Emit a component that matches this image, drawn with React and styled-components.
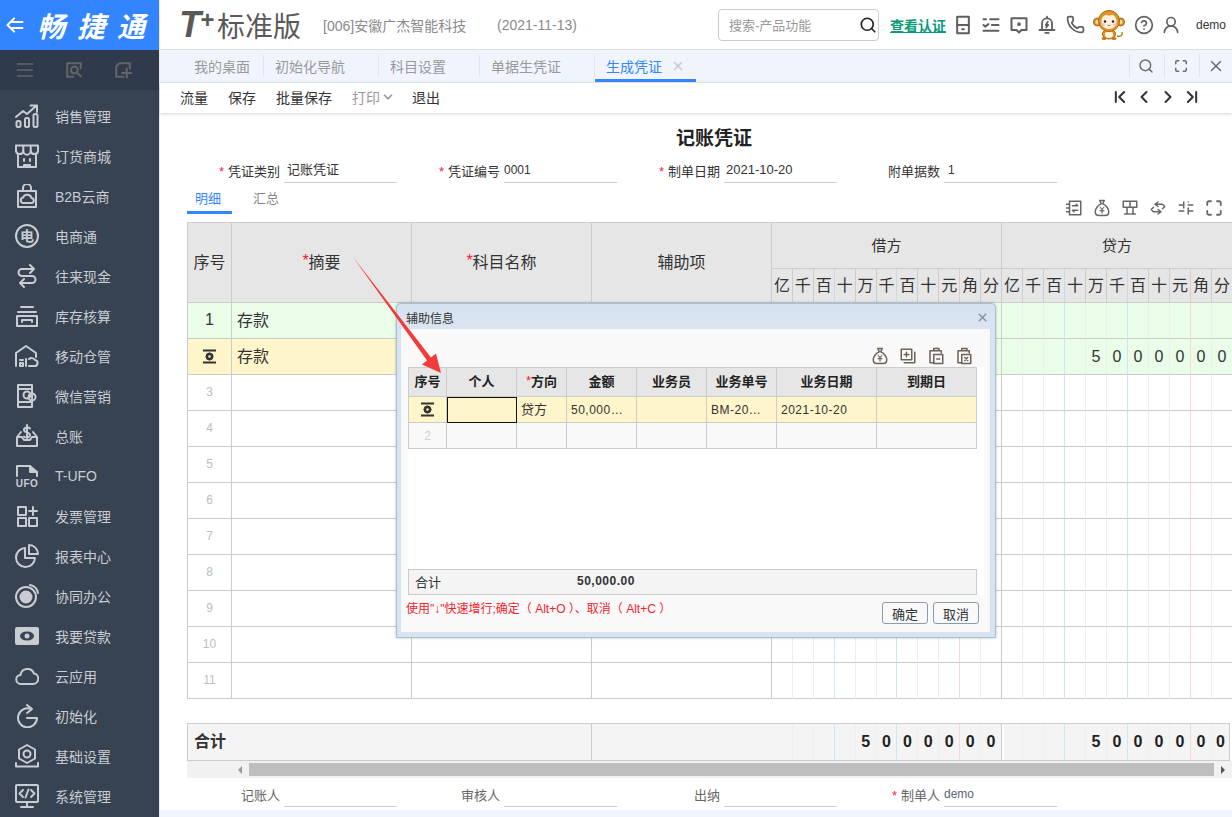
import React from 'react';
import styled, { createGlobalStyle } from 'styled-components';
import { Phone, CircleHelp, UserRound, Search, X, Maximize, ChevronFirst, ChevronLast, ChevronLeft, ChevronRight, ChevronDown } from 'lucide-react';

const GlobalStyle = createGlobalStyle`
  html, body { margin: 0; padding: 0; height: 100%; overflow: hidden; background: #fff; }
  body { font-family: "Liberation Sans", "Noto Sans CJK SC", sans-serif; color: #333; }
  * { box-sizing: border-box; }
`;

const Page = styled.div`
  position: relative;
  display: flex;
  width: 1232px;
  height: 817px;
  overflow: hidden;
`;

/* ---------- sidebar ---------- */
const Sidebar = styled.aside`
  width: 159px;
  flex: none;
  display: flex;
  flex-direction: column;
  background: #374252;
`;
const Brand = styled.div`
  height: 50px;
  display: flex;
  align-items: center;
  padding-left: 5px;
  background: #3385ff;
  color: #fff;
`;
const BrandName = styled.span`
  margin-left: 12px;
  font-size: 28px;
  font-weight: 700;
  font-style: italic;
  letter-spacing: 12px;
  white-space: nowrap;
`;
const SideTools = styled.div`
  height: 40px;
  display: flex;
  align-items: center;
  justify-content: space-between;
  padding: 0 27px 0 16px;
  background: #2f3a4c;
  color: #646464;
`;
const Menu = styled.nav`
  padding-top: 6px;
`;
const MenuItem = styled.div`
  height: 40px;
  display: flex;
  align-items: center;
  gap: 16px;
  padding-left: 15px;
  font-size: 14px;
  color: #c9cdd3;
`;

const Ico = ({ size = 24, children, sw = 2 }) => (
  <svg width={size} height={size} viewBox="0 0 24 24" fill="none" stroke="currentColor" strokeWidth={sw} strokeLinecap="round" strokeLinejoin="round" style={{ flex: 'none', display: 'block' }}>
    {children}
  </svg>
);

const menuIcons = {
  sales: <><rect x="1.5" y="17" width="4" height="6" rx="1.5" /><rect x="10" y="14" width="4" height="9" rx="1.5" /><rect x="18.5" y="10" width="4" height="13" rx="1.5" /><path d="M1 13l7-6 4 3 9-8M15.5 1.5H22V8" /></>,
  store: <><path d="M1 1.5h22v5.5a3.7 3.7 0 0 1-7.3 0 3.7 3.7 0 0 1-7.4 0 3.7 3.7 0 0 1-7.3 0z" /><path d="M3 11v12h18V11M9 15v2M15 15v2M9 23v-2h6v2M8.3 2v5M15.7 2v5" /></>,
  bag: <><rect x="3" y="7" width="18" height="16" /><path d="M8 7V4a4 4 0 0 1 8 0v3M8 19h8a2.5 2.5 0 0 0 .5-5 4.5 4.5 0 0 0-8.5-.5 2.8 2.8 0 0 0 0 5.500z" /></>,
  dian: <><circle cx="12" cy="12" r="11" /><text x="12" y="17" textAnchor="middle" fontSize="14" fontWeight="700" fill="currentColor" stroke="none">电</text></>,
  swap: <path d="M15 1l4 4-4 4M19 5H7a3.500 3.500 0 0 0 0 7h10a3.500 3.500 0 0 1 0 7H5M9 15l-4 4 4 4" />,
  stock: <><path d="M6 3h12M3 8h18" /><rect x="2" y="12" width="20" height="10" /><path d="M7 18v-2h10v2" /></>,
  house: <><path d="M1 22V9l10-7 10 7v4" /><path d="M5 22v-3h3v3zM5 16h3M11 15v7M14 22h5a3 3 0 0 0 1-6 4 4 0 0 0-6-1" /></>,
  wechat: <><rect x="3" y="1" width="14" height="22" /><path d="M3 18h14M3 5h14" /><circle cx="12" cy="11" r="3.500" /><circle cx="17" cy="13" r="3.500" /></>,
  ledger: <><path d="M6 8L2 13v9h20v-9l-4-5M2 13h5l2 3h6l2-3h5" /><path d="M15 4.500C14 3 9 3 9 6s6 2 6 5-5 3-6 1.500M12 1v13" /></>,
  ufo: <><path d="M2 12V2h13l7 6v4" /><path d="M15 2v6h7" fill="currentColor" /><text x="12" y="23" textAnchor="middle" fontSize="10" fontWeight="700" fill="currentColor" stroke="none" letterSpacing="0.500">UFO</text></>,
  tiles: <><rect x="3" y="3" width="8" height="8" /><rect x="3" y="14" width="8" height="8" /><rect x="14" y="14" width="8" height="8" /><path d="M18 3v8M14 7h8" /></>,
  pie: <><path d="M10 4a9.500 9.500 0 1 0 10 10H10z" /><path d="M14 1a9 9 0 0 1 9 9h-9z" /></>,
  sync: <><circle cx="11" cy="13" r="10" /><circle cx="11" cy="13" r="5.500" fill="currentColor" /><path d="M15 1a9 9 0 0 1 8 8" /></>,
  loan: <><rect x="1" y="4" width="22" height="16" rx="1" fill="currentColor" /><ellipse cx="12" cy="12" rx="7" ry="4.500" fill="#374252" stroke="none" /><circle cx="12" cy="12" r="2.500" fill="currentColor" stroke="none" /></>,
  cloud: <path d="M6 20a4.500 4.500 0 0 1-.5-9A7 7 0 0 1 19 9.500 5.300 5.300 0 0 1 18 20z" />,
  init: <><path d="M16 5a9.500 9.500 0 1 0 6 9H12" /><path d="M12 1l5 4-5 4" /></>,
  gear: <><path d="M12 1l8 4.500v9L12 19l-8-4.500v-9z" /><circle cx="12" cy="10" r="3.500" /><path d="M1 19v3.500h22V19" /></>,
  code: <><rect x="1" y="1" width="22" height="17" rx="1" /><path d="M12 18v4M6 23h12M8 6l-3.500 3.500L8 13M16 6l3.500 3.500L16 13M13.500 5.500l-3 8" /></>,
};

const menu = [
  ['sales', '销售管理'], ['store', '订货商城'], ['bag', 'B2B云商'], ['dian', '电商通'], ['swap', '往来现金'],
  ['stock', '库存核算'], ['house', '移动仓管'], ['wechat', '微信营销'], ['ledger', '总账'], ['ufo', 'T-UFO'],
  ['tiles', '发票管理'], ['pie', '报表中心'], ['sync', '协同办公'], ['loan', '我要贷款'], ['cloud', '云应用'],
  ['init', '初始化'], ['gear', '基础设置'], ['code', '系统管理'],
];

/* ---------- top header ---------- */
const Main = styled.main`
  flex: 1;
  min-width: 0;
  display: flex;
  flex-direction: column;
  border-left: 1px solid #e8e8e8;
`;
const Header = styled.header`
  height: 50px;
  flex: none;
  display: flex;
  align-items: center;
  padding-left: 19px;
  border-bottom: 1px solid #dcdcdc;
`;
const Product = styled.div`
  display: flex;
  align-items: center;
  width: 144px;
  color: #595959;
  font-size: 28px;
  white-space: nowrap;
`;
const ProductMark = styled.span`
  font-size: 36px;
  font-weight: 700;
  font-style: italic;
  line-height: 1;
  margin-right: 4px;
  letter-spacing: -1px;
  & > i { font-size: 24px; vertical-align: 9px; font-style: italic; }
`;
const Company = styled.span`
  width: 174px;
  font-size: 14px;
  color: #8a8a8a;
  white-space: nowrap;
`;
const DateText = styled.span`
  width: 221px;
  font-size: 14px;
  color: #8a8a8a;
`;
const SearchBox = styled.div`
  width: 161px;
  height: 32px;
  flex: none;
  display: flex;
  align-items: center;
  justify-content: space-between;
  padding: 0 1px 0 10px;
  border: 1px solid #cccccc;
  border-radius: 4px;
  font-size: 13px;
  color: #999;
`;
const CertLink = styled.a`
  margin-left: 11px;
  font-size: 14px;
  font-weight: 700;
  color: #0a9a78;
  text-decoration: underline;
  white-space: nowrap;
`;
const HeadIcons = styled.div`
  display: flex;
  align-items: center;
  color: #5f5f5f;
  margin-left: 3px;
`;
const HeadIcon = styled.span`
  width: ${p => p.$w || 28}px;
  display: flex;
  justify-content: center;
`;
const DemoName = styled.span`
  margin-left: 13px;
  font-size: 12px;
  color: #333;
`;

/* ---------- tabs + toolbar ---------- */
const TabBar = styled.div`
  height: 33px;
  flex: none;
  display: flex;
  padding-left: 23px;
  background: #f0f5fd;
  border-bottom: 1px solid #e6e6e6;
`;
const Tab = styled.div`
  position: relative;
  display: flex;
  align-items: center;
  height: 32px;
  padding: 0 ${p => (p.$first ? 14 : p.$active ? 11 : 34)}px 0 11px;
  gap: 9px;
  font-size: 14px;
  white-space: nowrap;
  color: ${p => (p.$active ? '#3385ff' : '#999')};
  ${p => p.$active && 'border-bottom: 3px solid #3385ff; padding-top: 3px;'}
  &::after {
    content: ${p => (p.$active ? 'none' : '""')};
    position: absolute;
    right: 0;
    top: 5px;
    bottom: 5px;
    width: 1px;
    background: #e2e6ec;
  }
`;
const TabTools = styled.div`
  margin-left: auto;
  display: flex;
  color: #6b6b6b;
`;
const TabTool = styled.div`
  width: ${p => p.$w}px;
  height: 24px;
  margin-top: 4px;
  padding-right: ${p => p.$w - 32}px;
  display: flex;
  align-items: center;
  justify-content: center;
  border-left: 1px solid #e2e6ec;
`;
const Toolbar = styled.div`
  height: 30px;
  flex: none;
  display: flex;
  align-items: center;
  padding: 0 30px 2px 20px;
  gap: 20px;
  font-size: 14px;
  background: #fff;
  box-shadow: 0 1px 3px rgba(0, 0, 0, 0.16);
  position: relative;
`;
const ToolAction = styled.span`
  display: flex;
  align-items: center;
  gap: 1px;
  color: ${p => (p.$off ? '#999' : '#333')};
  white-space: nowrap;
  ${p => p.$off && 'margin-right: -3px;'}
`;
const Pager = styled.div`
  margin-left: auto;
  display: flex;
  gap: 4px;
  color: #333;
`;

/* ---------- voucher ---------- */
const Content = styled.section`
  flex: 1;
  min-height: 0;
  display: flex;
  flex-direction: column;
  overflow: hidden;
`;
const Title = styled.h1`
  margin: 13px 0 6px;
  height: 26px;
  padding-left: 36px;
  text-align: center;
  font-size: 19px;
  line-height: 26px;
  font-weight: 700;
  color: #222;
`;
const FieldRow = styled.div`
  flex: none;
  display: grid;
  grid-template-columns: repeat(4, 220px);
  margin: ${p => p.$top || 0}px 0 0 17px;
`;
const Field = styled.div`
  height: 25px;
  display: flex;
  align-items: center;
`;
const FieldLabel = styled.label`
  width: 103px;
  text-align: right;
  font-size: 13px;
  color: ${p => (p.$muted ? '#666' : '#333')};
  white-space: nowrap;
`;
const Star = styled.span`
  color: #f5222d;
  margin-right: ${p => (p.$tight ? 0 : 4)}px;
  font-weight: 400;
`;
const FieldValue = styled.div`
  width: 113px;
  height: 25px;
  margin-left: 4px;
  padding-left: ${p => p.$pad ?? 3}px;
  line-height: 24px;
  border-bottom: 1px solid #cccccc;
  font-size: ${p => (p.$big ? 13 : 12)}px;
  color: ${p => (p.$muted ? '#5a6578' : '#333')};
`;
const SubTabs = styled.div`
  height: 31px;
  flex: none;
  display: flex;
  align-items: stretch;
  margin: 0 9px 8px 27px;
`;
const SubTab = styled.div`
  width: 45px;
  margin-right: ${p => (p.$active ? 21 : 0)}px;
  padding: 5px ${p => (p.$active ? 3 : 0)}px 0 0;
  text-align: ${p => (p.$active ? 'center' : 'left')};
  font-size: 13px;
  color: ${p => (p.$active ? '#3385ff' : '#888')};
  ${p => p.$active && 'border-bottom: 3px solid #3385ff;'}
`;
const TinyIcons = styled.div`
  margin: 0 0 -3px auto;
  display: flex;
  align-items: flex-end;
  gap: 10px;
  color: #666;
`;

const tone = i => (i === 2 || i === 5 ? 'blue' : i === 8 ? 'red' : 'plain');
const lineColor = { blue: '#cfe6f2', red: '#f3d8d8', plain: '#eeeeee' };
const headLine = { blue: '#c6dbe6', red: '#e2caca', plain: '#cccccc' };

const VoucherGrid = styled.div`
  flex: none;
  display: grid;
  grid-template-columns: 44px 180px 180px 180px repeat(11, 20.91px) repeat(11, 21px);
  grid-template-rows: 46px 34px repeat(11, 36px);
  margin-left: 27px;
  width: max-content;
  border-top: 1px solid #cccccc;
  border-left: 1px solid #cccccc;
`;
const HeadCell = styled.div`
  grid-row: span ${p => p.$rows || 1};
  grid-column: span ${p => p.$cols || 1};
  display: flex;
  align-items: center;
  justify-content: center;
  padding-bottom: 3px;
  background: #e6e6e6;
  border-right: 1px solid #cccccc;
  border-bottom: 1px solid #cccccc;
  font-size: ${p => (p.$small ? 15 : 16)}px;
  color: #333;
  white-space: nowrap;
`;
const DigitHead = styled(HeadCell)`
  font-size: 16px;
  border-right-color: ${p => headLine[p.$tone]};
`;
const Cell = styled.div`
  display: flex;
  align-items: center;
  justify-content: ${p => (p.$center ? 'center' : 'flex-start')};
  padding: 0 0 ${p => (p.$center ? 1 : 3)}px ${p => (p.$center ? 0 : 5)}px;
  background: ${p => p.$bg || '#fff'};
  border-right: 1px solid #cccccc;
  border-bottom: 1px solid #cccccc;
  font-size: ${p => (p.$faint ? 12 : 16)}px;
  color: ${p => (p.$faint ? '#bdbdbd' : '#333')};
`;
const DigitCell = styled.div`
  display: flex;
  align-items: center;
  justify-content: center;
  background: ${p => p.$bg || '#fff'};
  border-right: 1px solid ${p => (p.$end ? '#cccccc' : lineColor[p.$tone])};
  border-bottom: 1px solid #cccccc;
  font-size: 16px;
  color: #333;
`;
const TotalGrid = styled.div`
  flex: none;
  display: grid;
  grid-template-columns: 44px 180px 180px 180px repeat(11, 20.91px) repeat(10, 21px) 18px;
  grid-auto-rows: 36px;
  margin: 24px 0 0 27px;
  width: max-content;
  border-top: 1px solid #cccccc;
  border-left: 1px solid #cccccc;
  border-bottom: 1px solid #cccccc;
`;
const TotalLabel = styled.div`
  grid-column: span 3;
  display: flex;
  align-items: center;
  padding: 0 0 4px 6px;
  background: #f4f4f4;
  border-right: 1px solid #cccccc;
  font-size: 16px;
  font-weight: 700;
`;
const TotalBlank = styled.div`
  background: #f4f4f4;
`;
const TotalDigit = styled.div`
  display: flex;
  align-items: center;
  justify-content: center;
  padding-bottom: 1px;
  background: #f4f4f4;
  border-right: 1px solid ${p => (p.$end ? '#cccccc' : lineColor[p.$tone])};
  ${p => p.$gap && 'border-left: 2px solid #fff;'}
  font-size: 16px;
  font-weight: 700;
  color: #222;
`;
const ScrollBar = styled.div`
  height: 17px;
  flex: none;
  display: flex;
  align-items: center;
  margin-left: 27px;
  padding-left: 46px;
  background: #f1f1f1;
  color: #777;
`;
const ScrollThumb = styled.div`
  width: 965px;
  height: 13px;
  margin: 0 4px 0 7px;
  background: #bebebe;
`;
const ScrollArrow = styled.div`
  width: 0;
  height: 0;
  margin-left: ${p => (p.$left ? 5 : 3)}px;
  border-top: 4px solid transparent;
  border-bottom: 4px solid transparent;
  ${p => (p.$left ? 'border-right: 4px solid #999;' : 'border-left: 4px solid #555;')}
`;
const BottomBar = styled.div`
  height: 8px;
  margin-top: 3px;
  flex: none;
  background: #f0f5fd;
`;

/* ---------- dialog ---------- */
const Dialog = styled.div`
  position: absolute;
  left: 396px;
  top: 303px;
  width: 600px;
  height: 335px;
  display: flex;
  flex-direction: column;
  padding: 0 5px 5px 4px;
  background: #d7e3f1;
  border: 1px solid #a9c0d4;
  border-radius: 5px 5px 0 0;
  box-shadow: 0 0 3px rgba(0, 0, 0, 0.25);
  z-index: 5;
`;
const DialogTitle = styled.div`
  height: 25px;
  flex: none;
  display: flex;
  align-items: center;
  justify-content: space-between;
  padding: 2px 1px 0 5px;
  font-size: 12px;
  color: #333;
  background: linear-gradient(#d6e2ef, #dae5f1);
`;
const DialogBody = styled.div`
  flex: 1;
  min-height: 0;
  display: flex;
  flex-direction: column;
  padding-left: 7px;
  background: #f9f9f9;
`;
const DialogIcons = styled.div`
  height: 38px;
  flex: none;
  display: flex;
  align-items: flex-end;
  justify-content: flex-end;
  gap: 10px;
  padding: 0 17px 2px 0;
  color: #6d6258;
`;
const Panel = styled.div`
  width: 576px;
  height: 228px;
  flex: none;
  display: flex;
  flex-direction: column;
  justify-content: space-between;
  background: #fff;
`;
const SubGrid = styled.div`
  width: 569px;
  display: grid;
  grid-template-columns: 38px 70px 50px 70px 70px 70px 100px 100px;
  grid-template-rows: 29px 26px 26px;
  border-top: 1px solid #cccccc;
  border-left: 1px solid #cccccc;
`;
const SubHead = styled.div`
  display: flex;
  align-items: center;
  justify-content: center;
  padding-bottom: 3px;
  background: #e6e6e6;
  border-right: 1px solid #cccccc;
  border-bottom: 1px solid #cccccc;
  font-size: 13px;
  font-weight: 700;
  color: #222;
`;
const SubCell = styled.div`
  display: flex;
  align-items: center;
  justify-content: ${p => (p.$center ? 'center' : 'flex-start')};
  padding: 0 0 ${p => (p.$zh ? 2 : 0)}px ${p => (p.$center ? 0 : 4)}px;
  background: ${p => p.$bg || '#f9f9f9'};
  border-right: 1px solid #cccccc;
  border-bottom: 1px solid #cccccc;
  font-size: ${p => (p.$zh ? 13 : 12)}px;
  color: ${p => (p.$faint ? '#d0d0d0' : '#333')};
  letter-spacing: ${p => (p.$wide ? 0.5 : 0)}px;
  white-space: nowrap;
  ${p => p.$focus && 'outline: 1.5px solid #111; outline-offset: -1px;'}
`;
const SubTotal = styled.div`
  width: 569px;
  height: 26px;
  display: flex;
  align-items: center;
  padding: 0 0 2px 6px;
  background: #f4f4f4;
  border: 1px solid #cccccc;
  font-size: 13px;
`;
const SubTotalSum = styled.span`
  margin-left: 136px;
  font-size: 12px;
  font-weight: 700;
  letter-spacing: 0.5px;
`;
const DialogFoot = styled.div`
  flex: 1;
  display: flex;
  justify-content: space-between;
  padding: 7px 11px 0 0;
`;
const Hint = styled.div`
  margin: -3px 0 0 -2px;
  font-size: 12px;
  color: #f5222d;
  white-space: nowrap;
`;
const Buttons = styled.div`
  display: flex;
  gap: 5px;
`;
const DlgButton = styled.button`
  width: 46px;
  height: 22px;
  padding: 0;
  background: #f9f9f9;
  border: 1px solid #8c9bb0;
  border-radius: 3px;
  font: inherit;
  font-size: 13px;
  color: #333;
`;
const ArrowOverlay = styled.svg`
  position: absolute;
  left: 0;
  top: 0;
  z-index: 6;
  pointer-events: none;
`;

const Handle = () => (
  <svg width="15" height="15" viewBox="0 0 15 15" style={{ display: 'block' }}>
    <path d="M1 1.500h13M1 13.500h13" stroke="#333" strokeWidth="2" />
    <circle cx="7.500" cy="7.500" r="2.500" fill="none" stroke="#333" strokeWidth="2.400" />
    <path d="M7.500 3.500v1M7.500 10.500v1M3.500 7.500h1M10.500 7.500h1M4.700 4.700l.8.8M9.500 9.500l.8.8M10.300 4.700l-.8.8M5.500 9.500l-.8.8" stroke="#333" strokeWidth="1.500" />
  </svg>
);

const MoneyBag = ({ size = 18 }) => (
  <Ico size={size} sw={2}>
    <path d="M9 2h6l-2 4.500c4 1.500 8 6 8 10.500 0 3-2 5-5 5H8c-3 0-5-2-5-5 0-4.500 4-9 8-10.500z" />
    <path d="M9.500 11l2.500 3 2.500-3M12 14v5M9.500 15.500h5" strokeWidth="1.500" />
  </Ico>
);

const Monkey = () => (
  <svg width="32" height="30" viewBox="0 0 32 30" style={{ display: 'block' }}>
    <circle cx="4.500" cy="12" r="4" fill="#e0962a" stroke="#a8650f" />
    <circle cx="27.500" cy="12" r="4" fill="#e0962a" stroke="#a8650f" />
    <circle cx="4.500" cy="12" r="2" fill="#fbdcb4" />
    <circle cx="27.500" cy="12" r="2" fill="#fbdcb4" />
    <path d="M24 26c4 1 6-1 5-4" fill="none" stroke="#c57c1a" strokeWidth="1.500" />
    <ellipse cx="16" cy="24" rx="6.500" ry="5" fill="#e0962a" stroke="#a8650f" />
    <ellipse cx="16" cy="24.500" rx="4" ry="3.500" fill="#fff1df" />
    <ellipse cx="11" cy="28.500" rx="2.500" ry="1.500" fill="#c57c1a" />
    <ellipse cx="21" cy="28.500" rx="2.500" ry="1.500" fill="#c57c1a" />
    <circle cx="16" cy="11" r="10.500" fill="#e0962a" stroke="#a8650f" />
    <path d="M16 6c-2-2-7-1-7.500 5-.5 5 3.500 8 7.500 8s8-3 7.500-8c-.5-6-5.500-7-7.500-5z" fill="#fff1df" />
    <circle cx="12" cy="11.500" r="1.200" fill="#222" />
    <circle cx="20" cy="11.500" r="1.200" fill="#222" />
    <ellipse cx="10" cy="14.500" rx="2" ry="1.200" fill="#f9b7b7" />
    <ellipse cx="22" cy="14.500" rx="2" ry="1.200" fill="#f9b7b7" />
    <path d="M14.500 15c1 .8 2 .8 3 0" fill="none" stroke="#a8650f" />
  </svg>
);

const cny = ['亿', '千', '百', '十', '万', '千', '百', '十', '元', '角', '分'];
const amount = ['', '', '', '', '5', '0', '0', '0', '0', '0', '0'];
const GREEN = '#e9fde9';
const YELLOW = '#fef5cb';

function VoucherRow({ index }) {
  const no = index + 1;
  const leftBg = no === 1 ? GREEN : no === 2 ? YELLOW : undefined;
  const sumBg = no <= 2 ? GREEN : undefined;
  return (
    <>
      {no === 2
        ? <Cell $center $bg={leftBg}><Handle /></Cell>
        : <Cell $center $bg={leftBg} $faint={no > 2}>{no}</Cell>}
      <Cell $bg={leftBg}>{no <= 2 ? '存款' : ''}</Cell>
      <Cell $bg={leftBg} />
      <Cell $bg={leftBg} />
      {cny.map((_, i) => <DigitCell key={'d' + i} $tone={tone(i)} $end={i === 10} $bg={sumBg} />)}
      {cny.map((_, i) => <DigitCell key={'c' + i} $tone={tone(i)} $end={i === 10} $bg={sumBg}>{no === 2 ? amount[i] : ''}</DigitCell>)}
    </>
  );
}

function App() {
  return (
    <Page>
      <GlobalStyle />
      <Sidebar>
        <Brand>
          <Ico size={20} sw={2.4}><path d="M11 4l-8 8 8 8M8 8.500h13M8 15.500h13" /></Ico>
          <BrandName>畅捷通</BrandName>
        </Brand>
        <SideTools>
          <Ico size={18} sw={2.200}><path d="M2 4h20M2 12h20M2 20h20" /></Ico>
          <Ico size={18} sw={2.800}><path d="M21 10V3H3v18h8" /><circle cx="12.500" cy="12" r="4.500" /><path d="M16 15.500l5 5" /></Ico>
          <Ico size={18} sw={2.800}><path d="M21 10V3H7L3 7v14h10" /><path d="M17 10v12M11 16h12" /></Ico>
        </SideTools>
        <Menu>
          {menu.map(([icon, label]) => (
            <MenuItem key={label}>
              <Ico>{menuIcons[icon]}</Ico>
              <span>{label}</span>
            </MenuItem>
          ))}
        </Menu>
      </Sidebar>

      <Main>
        <Header>
          <Product><ProductMark>T<i>+</i></ProductMark>标准版</Product>
          <Company>[006]安徽广杰智能科技</Company>
          <DateText>(2021-11-13)</DateText>
          <SearchBox>
            搜索-产品功能
            <Search size={18} color="#222" strokeWidth={2.200} />
          </SearchBox>
          <CertLink>查看认证</CertLink>
          <HeadIcons>
            <HeadIcon><Ico size={20} sw={2.400}><rect x="5" y="2" width="14" height="20" /><path d="M5 12h14M11 17h2" /></Ico></HeadIcon>
            <HeadIcon><Ico size={20} sw={2.400}><path d="M11 5h10M3 5h3M3 12l2 2 4-3M13 12h8M3 19h18" /></Ico></HeadIcon>
            <HeadIcon><Ico size={20} sw={2.400}><path d="M3 4h18v14h-6l-3 3-3-3H3z" /><circle cx="12" cy="11" r="1" /></Ico></HeadIcon>
            <HeadIcon><Ico size={20} sw={2.200}><path d="M6 17V10a6 6 0 0 1 12 0v7M3 18h18M10 21.500h4M12 2v2M13 8l-2.500 4h3L11 15" /></Ico></HeadIcon>
            <HeadIcon><Phone size={19} strokeWidth={2.200} /></HeadIcon>
            <HeadIcon $w={40}><Monkey /></HeadIcon>
            <HeadIcon $w={30}><CircleHelp size={20} /></HeadIcon>
            <HeadIcon $w={24}><UserRound size={20} /></HeadIcon>
          </HeadIcons>
          <DemoName>demo</DemoName>
        </Header>

        <TabBar>
          <Tab $first>我的桌面</Tab>
          <Tab>初始化导航</Tab>
          <Tab>科目设置</Tab>
          <Tab>单据生凭证</Tab>
          <Tab $active>生成凭证<X size={14} color="#c4c8cf" strokeWidth={2.500} /></Tab>
          <TabTools>
            <TabTool $w={35}><Search size={16} strokeWidth={2.200} /></TabTool>
            <TabTool $w={35}><Maximize size={14} strokeWidth={2.500} /></TabTool>
            <TabTool $w={33}><X size={18} /></TabTool>
          </TabTools>
        </TabBar>

        <Toolbar>
          <ToolAction>流量</ToolAction>
          <ToolAction>保存</ToolAction>
          <ToolAction>批量保存</ToolAction>
          <ToolAction $off>打印<ChevronDown size={14} strokeWidth={3} /></ToolAction>
          <ToolAction>退出</ToolAction>
          <Pager>
            <ChevronFirst size={20} strokeWidth={2.400} />
            <ChevronLeft size={20} strokeWidth={2.400} />
            <ChevronRight size={20} strokeWidth={2.400} />
            <ChevronLast size={20} strokeWidth={2.400} />
          </Pager>
        </Toolbar>

        <Content>
          <Title>记账凭证</Title>
          <FieldRow>
            <Field><FieldLabel><Star>*</Star>凭证类别</FieldLabel><FieldValue $big>记账凭证</FieldValue></Field>
            <Field><FieldLabel><Star>*</Star>凭证编号</FieldLabel><FieldValue $pad={0}>0001</FieldValue></Field>
            <Field><FieldLabel><Star>*</Star>制单日期</FieldLabel><FieldValue $big $pad={2}>2021-10-20</FieldValue></Field>
            <Field><FieldLabel>附单据数</FieldLabel><FieldValue $pad={4}>1</FieldValue></Field>
          </FieldRow>
          <SubTabs>
            <SubTab $active>明细</SubTab>
            <SubTab>汇总</SubTab>
            <TinyIcons>
              <Ico size={18}><rect x="6" y="3" width="15" height="18" /><path d="M2 7h4M2 12h4M2 17h4M10 9h7l-2-2M17 15h-7l2 2" /></Ico>
              <MoneyBag />
              <Ico size={18}><path d="M3 3h18v8H3zM12 3v8M8 11v9M16 11v9M5 20h6M13 20h6" /></Ico>
              <Ico size={18}><path d="M8 7h10l3 3-3 3M16 17H6l-3-3 3-3M12 4l-4 3 4 3M12 14l4 3-4 3" /></Ico>
              <Ico size={18}><path d="M3 8h6M15 8h6M3 16h6M15 16h6M9 4v8M15 12v8M9 16h0M15 4h0" /></Ico>
              <Maximize size={18} strokeWidth={2.400} />
            </TinyIcons>
          </SubTabs>

          <VoucherGrid>
            <HeadCell $rows={2}>序号</HeadCell>
            <HeadCell $rows={2}><Star $tight>*</Star>摘要</HeadCell>
            <HeadCell $rows={2}><Star $tight>*</Star>科目名称</HeadCell>
            <HeadCell $rows={2}>辅助项</HeadCell>
            <HeadCell $cols={11} $small>借方</HeadCell>
            <HeadCell $cols={11} $small>贷方</HeadCell>
            {[...cny, ...cny].map((c, i) => <DigitHead key={i} $tone={tone(i % 11)}>{c}</DigitHead>)}
            {Array.from({ length: 11 }, (_, i) => <VoucherRow key={i} index={i} />)}
          </VoucherGrid>

          <TotalGrid>
            <TotalLabel>合计</TotalLabel>
            <TotalBlank />
            {amount.map((d, i) => <TotalDigit key={'td' + i} $tone={tone(i)} $end={i === 10}>{d}</TotalDigit>)}
            {amount.map((d, i) => <TotalDigit key={'tc' + i} $tone={tone(i)} $end={i === 10} $gap={i === 0}>{d}</TotalDigit>)}
          </TotalGrid>
          <ScrollBar>
            <ScrollArrow $left />
            <ScrollThumb />
            <ScrollArrow />
          </ScrollBar>
          <FieldRow $top={4}>
            <Field><FieldLabel $muted>记账人</FieldLabel><FieldValue /></Field>
            <Field><FieldLabel $muted>审核人</FieldLabel><FieldValue /></Field>
            <Field><FieldLabel $muted>出纳</FieldLabel><FieldValue /></Field>
            <Field><FieldLabel $muted><Star>*</Star>制单人</FieldLabel><FieldValue $muted $pad={0}>demo</FieldValue></Field>
          </FieldRow>
          <BottomBar />
        </Content>
      </Main>

      <Dialog>
        <DialogTitle>
          辅助信息
          <X size={13} color="#8a97a5" strokeWidth={3} />
        </DialogTitle>
        <DialogBody>
          <DialogIcons>
            <MoneyBag />
            <Ico size={18}><rect x="3" y="3" width="14" height="14" /><path d="M7 21h14V7M10 7v6M7 10h6" /></Ico>
            <Ico size={18}><path d="M9 5V2h7v3M4 5h15v3M4 5v16h5" /><rect x="9" y="10" width="12" height="12" /><path d="M13 16h4" /></Ico>
            <Ico size={18}><path d="M9 5V2h7v3M4 5h15v3M4 5v16h5" /><rect x="9" y="10" width="12" height="12" /><path d="M13 14l4 4M17 14l-4 4" /></Ico>
          </DialogIcons>
          <Panel>
            <SubGrid>
              <SubHead>序号</SubHead>
              <SubHead>个人</SubHead>
              <SubHead><Star $tight>*</Star>方向</SubHead>
              <SubHead>金额</SubHead>
              <SubHead>业务员</SubHead>
              <SubHead>业务单号</SubHead>
              <SubHead>业务日期</SubHead>
              <SubHead>到期日</SubHead>

              <SubCell $center $bg={YELLOW}><Handle /></SubCell>
              <SubCell $bg={YELLOW} $focus />
              <SubCell $bg={YELLOW} $zh>贷方</SubCell>
              <SubCell $bg={YELLOW} $wide>50,000…</SubCell>
              <SubCell $bg={YELLOW} />
              <SubCell $bg={YELLOW} $wide>BM-20…</SubCell>
              <SubCell $bg={YELLOW} $wide>2021-10-20</SubCell>
              <SubCell $bg={YELLOW} />

              <SubCell $center $faint>2</SubCell>
              {Array.from({ length: 7 }, (_, i) => <SubCell key={i} />)}
            </SubGrid>
            <SubTotal>合计<SubTotalSum>50,000.00</SubTotalSum></SubTotal>
          </Panel>
          <DialogFoot>
            <Hint>使用"↓"快速增行;确定（ Alt+O ）、取消（ Alt+C ）</Hint>
            <Buttons>
              <DlgButton>确定</DlgButton>
              <DlgButton>取消</DlgButton>
            </Buttons>
          </DialogFoot>
        </DialogBody>
      </Dialog>

      <ArrowOverlay width="1232" height="817">
        <polygon points="353,257 431,357.5 436,353.6 441,373 422,364.4 427,360.5" fill="#f23b3b" />
      </ArrowOverlay>
    </Page>
  );
}

export default App;
